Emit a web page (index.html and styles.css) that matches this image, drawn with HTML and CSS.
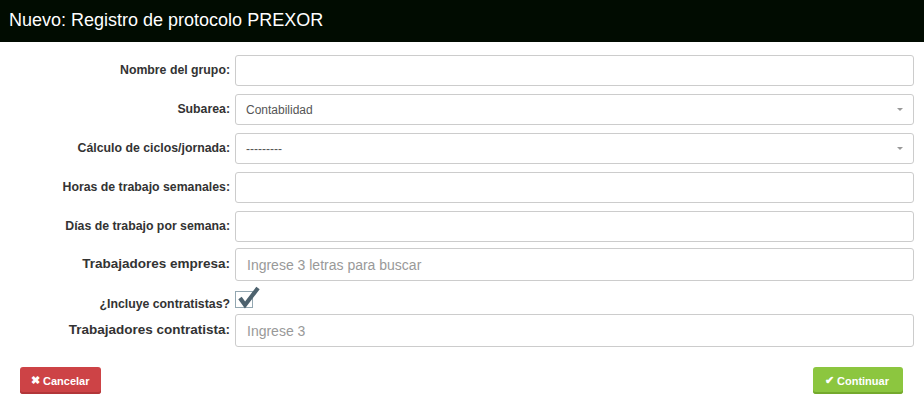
FILE: index.html
```html
<!DOCTYPE html>
<html lang="es">
<head>
<meta charset="utf-8">
<title>Nuevo: Registro de protocolo PREXOR</title>
<link rel="stylesheet" href="styles.css">
</head>
<body>
<div class="header">Nuevo: Registro de protocolo PREXOR</div>
<form class="form">
  <div class="row">
    <label class="label">Nombre del grupo:</label>
    <div class="field"></div>
  </div>
  <div class="row">
    <label class="label">Subarea:</label>
    <div class="field select"><span class="val">Contabilidad</span><span class="caret"></span></div>
  </div>
  <div class="row">
    <label class="label">Cálculo de ciclos/jornada:</label>
    <div class="field select"><span class="val">---------</span><span class="caret"></span></div>
  </div>
  <div class="row">
    <label class="label">Horas de trabajo semanales:</label>
    <div class="field"></div>
  </div>
  <div class="row row-dias">
    <label class="label">Días de trabajo por semana:</label>
    <div class="field"></div>
  </div>
  <div class="row row-big">
    <label class="label label-big">Trabajadores empresa:</label>
    <div class="field field-big"><span class="ph">Ingrese 3 letras para buscar</span></div>
  </div>
  <div class="row row-check">
    <label class="label">¿Incluye contratistas?</label>
    <div class="check">
      <svg class="tick" width="26" height="24" viewBox="0 0 26 24">
        <path d="M4 12 L9 19 L22 2" fill="none" stroke="#4d626e" stroke-width="4.2" stroke-linecap="butt" stroke-linejoin="miter"/>
      </svg>
    </div>
  </div>
  <div class="row row-big">
    <label class="label label-big">Trabajadores contratista:</label>
    <div class="field field-big"><span class="ph">Ingrese 3</span></div>
  </div>
  <div class="actions">
    <button type="button" class="btn btn-danger"><span class="ico">✖</span>Cancelar</button>
    <button type="button" class="btn btn-success"><span class="ico">✔</span>Continuar</button>
  </div>
</form>
</body>
</html>
```

FILE: styles.css
```css
* { box-sizing: border-box; }
body {
  margin: 0;
  background: #fff;
  font-family: "Liberation Sans", Arial, sans-serif;
  color: #333;
}
.header {
  height: 42px;
  line-height: 40px;
  padding-left: 9px;
  background: #010c01;
  color: #fff;
  font-size: 18px;
}
.form {
  padding: 13px 10px 0 0;
}
.row {
  display: flex;
  align-items: center;
  gap: 5px;
  margin-bottom: 8px;
}
.row-dias { margin-bottom: 6px; }
.label {
  width: 230px;
  flex: none;
  text-align: right;
  font-weight: bold;
  font-size: 12.3px;
  color: #333;
  padding-bottom: 2px;
}
.label-big { font-size: 13.5px; }
.field {
  flex: 1;
  height: 31px;
  border: 1px solid #ccc;
  border-radius: 3px;
  background: #fff;
  display: flex;
  align-items: center;
  padding: 0 10px;
  position: relative;
}
.field-big { height: 33px; padding-left: 11px; }
.row-big { margin-bottom: 0; }
.val { font-size: 12px; color: #555; }
.ph { font-size: 14px; color: #999; }
.caret {
  position: absolute;
  right: 10px;
  top: 13px;
  width: 0;
  height: 0;
  border-left: 3px solid transparent;
  border-right: 3px solid transparent;
  border-top: 3px solid #999;
}
.row-check {
  margin: 10px 0 6px 0;
  align-items: flex-end;
}
.row-check .label { padding-bottom: 0; line-height: 14px; margin-bottom: -3px; }
.check {
  width: 18px;
  height: 17px;
  border: 1px solid #93a7b1;
  position: relative;
}
.tick {
  position: absolute;
  left: 0px;
  top: -6px;
}
.actions {
  display: flex;
  justify-content: space-between;
  padding: 0 11px 0 20px;
  margin-top: 20px;
}
.btn {
  height: 27px;
  border: 0;
  border-radius: 3px;
  color: #fff;
  font-family: "Liberation Sans", Arial, sans-serif;
  font-weight: bold;
  font-size: 11px;
  padding: 0 11px;
  display: flex;
  align-items: center;
}
.btn .ico { font-size: 11px; margin-right: 3px; }
.btn-danger {
  background: #cd4346;
  box-shadow: inset 0 -2px 0 #b23639;
  width: 81px;
}
.btn-success {
  background: #8cc63f;
  box-shadow: inset 0 -2px 0 #74a92d;
  width: 90px;
  padding-left: 12px;
}
```
